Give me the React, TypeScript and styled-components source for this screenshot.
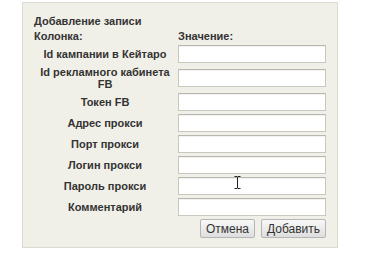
import styled, { createGlobalStyle } from 'styled-components';

const GlobalStyle = createGlobalStyle`
  body {
    margin: 0;
    background: #ffffff;
    font-family: Arial, "Liberation Sans", sans-serif;
  }
`;

const Page = styled.div`
  width: 374px;
  height: 261px;
  padding: 2px 0 0 22px;
  box-sizing: border-box;
  position: relative;
`;

const Panel = styled.div`
  width: 316px;
  height: 246px;
  box-sizing: border-box;
  background: #f1f0e8;
  border: 1px solid #dcdbd2;
  padding: 11px 0 0 11px;
  color: #333333;
  font-size: 11px;
  font-weight: bold;
`;

const Title = styled.div`
  height: 15px;
  line-height: 15px;
`;

const Grid = styled.div`
  display: grid;
  grid-template-columns: 142px 150px;
  column-gap: 2px;
  row-gap: 3px;
  align-items: center;
`;

const HeadCell = styled.div`
  height: 14px;
  line-height: 14px;
  margin-bottom: -1px;
`;

const Label = styled.div`
  text-align: center;
  line-height: 12px;
  padding: 0 2px;
`;

const Input = styled.input`
  width: 148px;
  height: 18px;
  box-sizing: border-box;
  margin: 0;
  background: #ffffff;
  border: 1px solid #c9c8c0;
  border-top-color: #b8b7af;
  box-shadow: inset 0 1px 1px rgba(0, 0, 0, 0.06);
`;

const Buttons = styled.div`
  grid-column: 2;
  display: flex;
  justify-content: flex-end;
  gap: 6px;
  width: 148px;
`;

const Button = styled.button`
  height: 19px;
  padding: 0 5px;
  font-family: Arial, "Liberation Sans", sans-serif;
  font-size: 12px;
  color: #333333;
  background: linear-gradient(#f8f8f8, #dedede);
  border: 1px solid #b5b5b5;
  border-radius: 2px;
`;

const Cursor = styled.svg`
  position: absolute;
  left: 234px;
  top: 176px;
`;

const rows: string[] = [
  'Id кампании в Кейтаро',
  'Id рекламного кабинета FB',
  'Токен FB',
  'Адрес прокси',
  'Порт прокси',
  'Логин прокси',
  'Пароль прокси',
  'Комментарий',
];

export default function App() {
  return (
    <>
      <GlobalStyle />
      <Page>
        <Panel>
          <Title>Добавление записи</Title>
          <Grid>
            <HeadCell>Колонка:</HeadCell>
            <HeadCell>Значение:</HeadCell>
            {rows.map(r => [
              <Label key={r}>{r}</Label>,
              <Input key={r + '-i'} />,
            ])}
            <Buttons>
              <Button>Отмена</Button>
              <Button>Добавить</Button>
            </Buttons>
          </Grid>
        </Panel>
        <Cursor width="7" height="13" viewBox="0 0 7 13">
          <path d="M0.5 0.5h2.5l0.5 0.5 0.5-0.5h2.5M3.5 1v11M0.5 12.5h2.5l0.5-0.5 0.5 0.5h2.5" stroke="#222" strokeWidth="1" fill="none" />
        </Cursor>
      </Page>
    </>
  );
}
